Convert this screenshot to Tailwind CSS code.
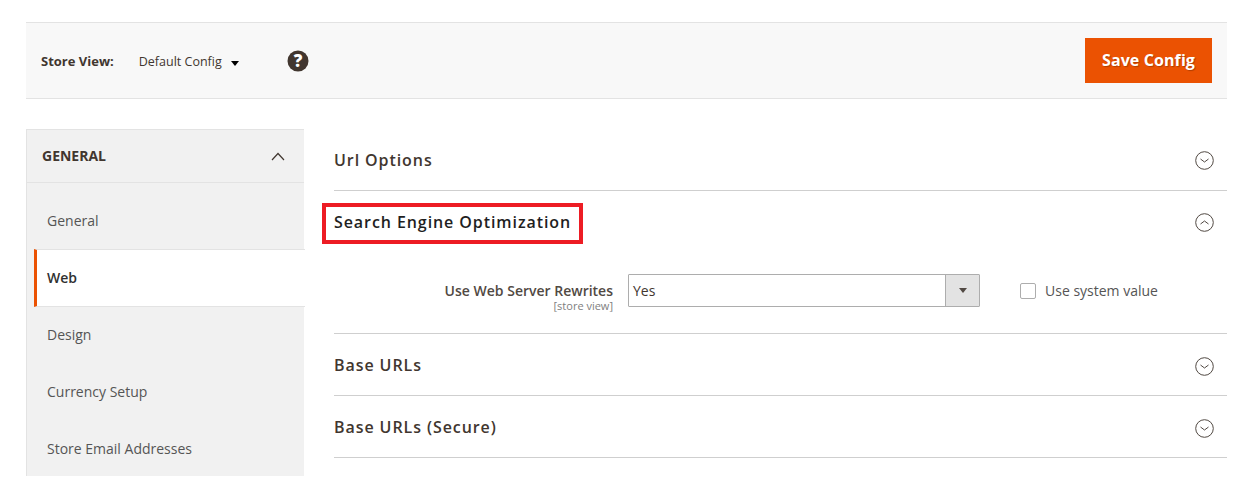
<!DOCTYPE html>
<html lang="en">
<head>
  <meta charset="UTF-8" />
  <title>Configuration</title>
  <script src="https://cdn.jsdelivr.net/npm/@tailwindcss/browser@4"></script>
</head>
<body class="bg-white text-[#303030] font-['Open_Sans',sans-serif] h-[480px] overflow-hidden">
  <div class="pt-[22px] pl-[26px] pr-[21px]">
    <!-- store view bar -->
    <header class="h-[77px] bg-[#f8f8f8] border-y border-[#e3e3e3] flex items-center pr-[15px]">
      <span class="ml-[15px] mt-[3px] text-[13px] font-bold text-[#41362f]">Store View:</span>
      <span class="ml-[25px] mt-[3px] text-[12.5px] text-[#41362f]">Default Config</span>
      <span class="ml-[9px] mt-[5px] border-x-[4px] border-x-transparent border-t-[5px] border-t-black"></span>
      <svg class="ml-[48px] mt-[1px]" width="22" height="22" viewBox="0 0 22 22">
        <circle cx="11" cy="11" r="10.5" fill="#41362f" />
        <text x="11" y="17" text-anchor="middle" font-size="17" font-weight="800" fill="#fff" font-family="Open Sans">?</text>
      </svg>
      <button class="ml-auto w-[127px] h-[45px] pb-[2px] bg-[#eb5202] text-white text-[16px] font-bold tracking-[0.1px] [text-shadow:1px_1px_1px_rgba(0,0,0,0.25)]">Save Config</button>
    </header>

    <div class="flex mt-[30px]">
      <!-- sidebar -->
      <nav class="w-[278px] shrink-0 h-[347px] bg-[#f1f1f1] border-x border-t border-[#e3e3e3] border-r-0">
        <div class="h-[53px] border-b border-[#e3e3e3] flex items-center justify-between pl-[15px] pr-[19px]">
          <span class="text-[14px] pb-[2px] font-bold text-[#41362f]">GENERAL</span>
          <svg width="14" height="9" viewBox="0 0 14 9" fill="none" stroke="#41362f" stroke-width="1.2"><path d="M1 8l6-6.5L13 8" /></svg>
        </div>
        <a class="h-[66px] flex items-center pt-[8px] pl-[20px] text-[14px] text-[#555]">General</a>
        <a class="h-[58px] -mr-px ml-[7px] flex items-center pb-[2px] pl-[10px] text-[14px] font-semibold text-[#303030] bg-white border-l-[3px] border-l-[#eb5202] border-y border-y-[#e3e3e3]">Web</a>
        <a class="h-[57px] flex items-center pb-[2px] pl-[20px] text-[14px] text-[#555]">Design</a>
        <a class="h-[57px] flex items-center pb-[2px] pl-[20px] text-[14px] text-[#555]">Currency Setup</a>
        <a class="h-[57px] flex items-center pb-[2px] pl-[20px] text-[14px] text-[#555]">Store Email Addresses</a>
      </nav>

      <!-- sections -->
      <main class="ml-[30px] flex-1">
        <section class="h-[62px] border-b border-[#cfcfcf] flex items-center justify-between pr-[13px]">
          <h2 class="text-[16px] font-semibold tracking-[0.92px] text-[#41362f]">Url Options</h2>
          <svg class="mt-[2px]" width="19" height="19" viewBox="0 0 19 19" fill="none" stroke="#514943"><circle cx="9.5" cy="9.5" r="8.8" /><path d="M5.5 8l4 3 4-3" /></svg>
        </section>

        <section class="h-[143px] border-b border-[#cfcfcf]">
          <div class="h-[62px] flex items-center justify-between pr-[13px]">
            <div class="relative">
              <h2 class="text-[16px] font-semibold tracking-[0.92px] text-[#1f1f1f]">Search Engine Optimization</h2>
              <div class="absolute -left-[12px] -top-[7px] -bottom-[10px] -right-[12px] border-[4px] border-[#ed1c24]"></div>
            </div>
            <svg width="19" height="19" viewBox="0 0 19 19" fill="none" stroke="#514943"><circle cx="9.5" cy="9.5" r="8.8" /><path d="M5.5 11l4-3 4 3" /></svg>
          </div>
          <div class="flex items-start mt-[21px]">
            <div class="w-[279px] text-right">
              <div class="text-[14px] leading-[17px] mt-[8px] font-semibold text-[#514943]">Use Web Server Rewrites</div>
              <div class="text-[11px] leading-[14px] text-[#808080]">[store view]</div>
            </div>
            <div class="ml-[15px] w-[352px] h-[33px] border border-[#adadad] rounded-[1px] flex items-center justify-between">
              <span class="pl-[4px] text-[14px] text-[#41362f]">Yes</span>
              <span class="w-[34px] h-full bg-[#e3e3e3] border-l border-[#adadad] flex items-center justify-center">
                <span class="border-x-[4px] border-x-transparent border-t-[5px] border-t-[#514943]"></span>
              </span>
            </div>
            <div class="ml-[40px] h-[33px] flex items-center">
              <span class="w-[16px] h-[16px] border border-[#adadad] rounded-[2px] bg-white"></span>
              <span class="ml-[9px] text-[14px] text-[#555]">Use system value</span>
            </div>
          </div>
        </section>

        <section class="h-[62px] border-b border-[#cfcfcf] flex items-center justify-between pr-[13px]">
          <h2 class="text-[16px] font-semibold tracking-[0.92px] text-[#41362f]">Base URLs</h2>
          <svg class="mt-[3px]" width="19" height="19" viewBox="0 0 19 19" fill="none" stroke="#514943"><circle cx="9.5" cy="9.5" r="8.8" /><path d="M5.5 8l4 3 4-3" /></svg>
        </section>
        <section class="h-[62px] border-b border-[#cfcfcf] flex items-center justify-between pr-[13px]">
          <h2 class="text-[16px] font-semibold tracking-[0.92px] text-[#41362f]">Base URLs (Secure)</h2>
          <svg class="mt-[3px]" width="19" height="19" viewBox="0 0 19 19" fill="none" stroke="#514943"><circle cx="9.5" cy="9.5" r="8.8" /><path d="M5.5 8l4 3 4-3" /></svg>
        </section>
      </main>
    </div>
  </div>
</body>
</html>
